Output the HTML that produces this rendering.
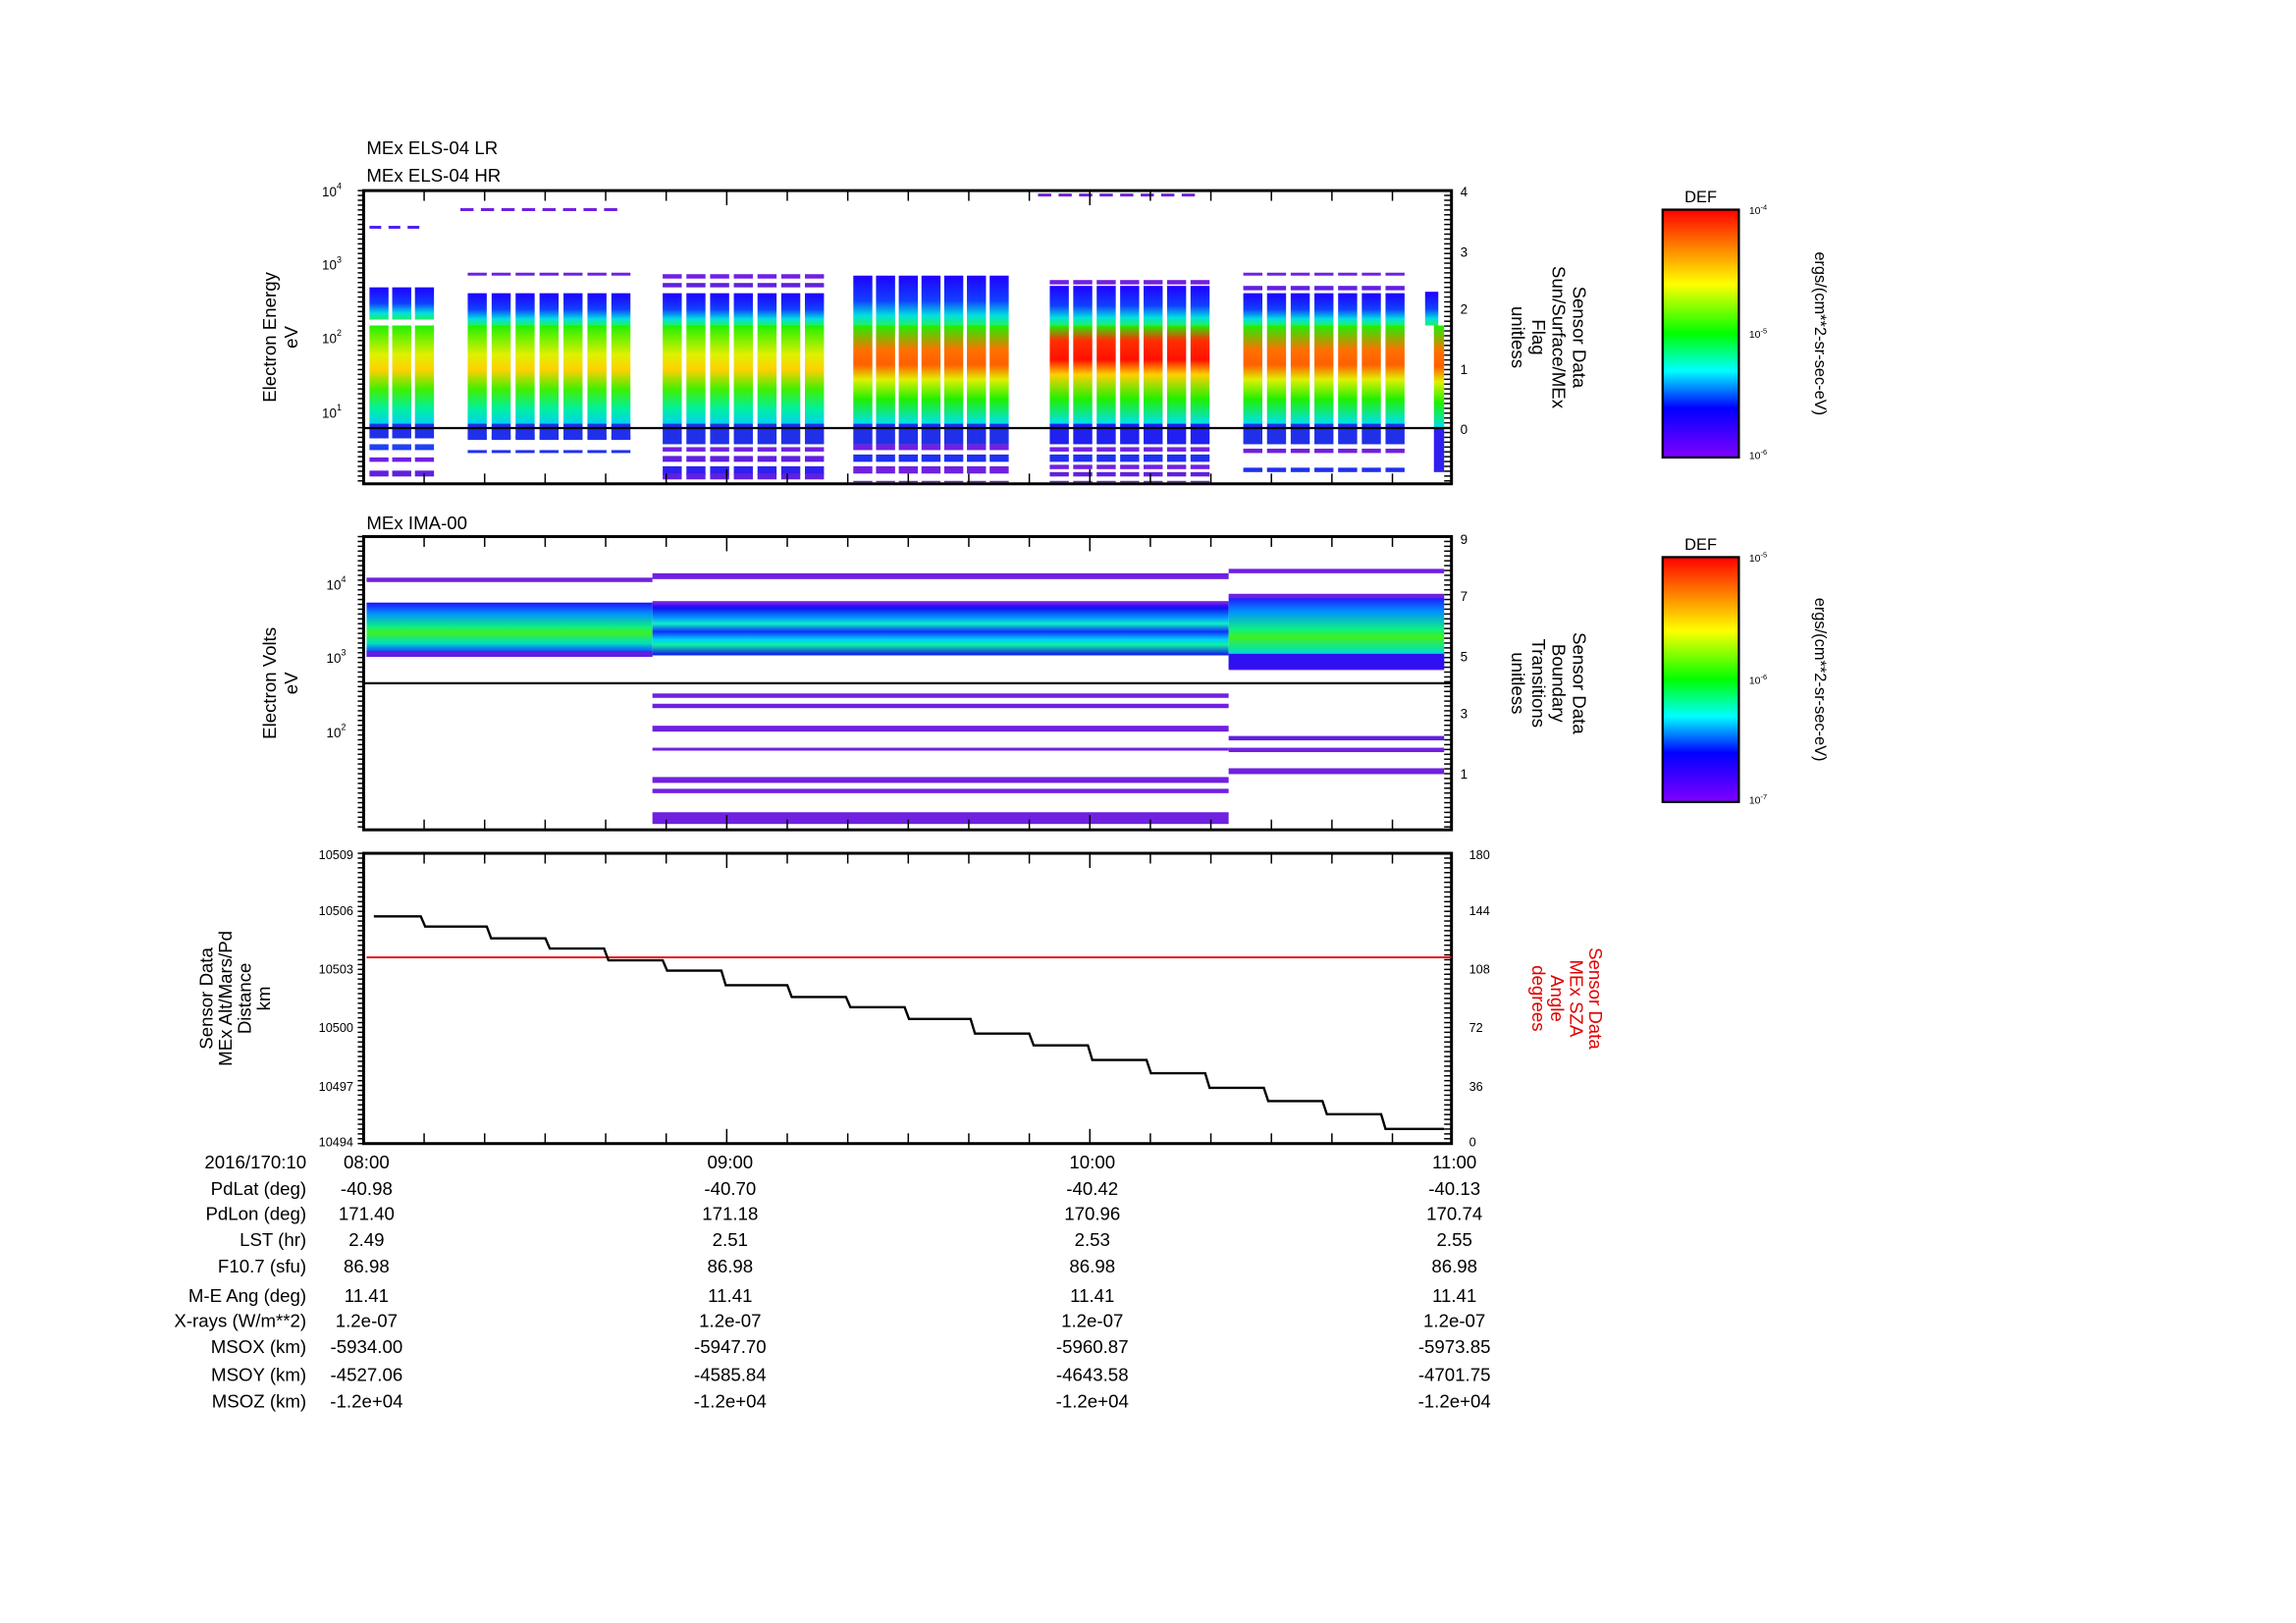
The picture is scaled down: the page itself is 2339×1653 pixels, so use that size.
<!DOCTYPE html>
<html><head><meta charset="utf-8"><style>
html,body{margin:0;padding:0;background:#fff;width:2339px;height:1653px;overflow:hidden}
svg{display:block}
text{font-family:"Liberation Sans",sans-serif;fill:#000}
</style></head><body>
<svg id="s" width="2339" height="1653" viewBox="0 0 1566 1107" preserveAspectRatio="none" xmlns="http://www.w3.org/2000/svg">
<defs>
<linearGradient id="rb" x1="0" y1="0" x2="0" y2="1">
<stop offset="0" stop-color="#ff0000"/><stop offset="0.15" stop-color="#ff8000"/><stop offset="0.3" stop-color="#ffff00"/><stop offset="0.5" stop-color="#00ff00"/><stop offset="0.65" stop-color="#00ffff"/><stop offset="0.8" stop-color="#0000ff"/><stop offset="1" stop-color="#8000ff"/>
</linearGradient>
<linearGradient id="lo1" x1="0" y1="0" x2="0" y2="1">
<stop offset="0" stop-color="#20f000"/><stop offset="0.3" stop-color="#e0f000"/><stop offset="0.45" stop-color="#ffd000"/><stop offset="0.65" stop-color="#40f000"/><stop offset="0.85" stop-color="#00f0a0"/><stop offset="1" stop-color="#00d0f0"/>
</linearGradient>
<linearGradient id="lo2" x1="0" y1="0" x2="0" y2="1">
<stop offset="0" stop-color="#20f000"/><stop offset="0.25" stop-color="#ff7000"/><stop offset="0.4" stop-color="#ff6000"/><stop offset="0.55" stop-color="#e0f000"/><stop offset="0.75" stop-color="#20f000"/><stop offset="1" stop-color="#00e0f0"/>
</linearGradient>
<linearGradient id="lo3" x1="0" y1="0" x2="0" y2="1">
<stop offset="0" stop-color="#20f000"/><stop offset="0.15" stop-color="#ff3000"/><stop offset="0.35" stop-color="#ff1000"/><stop offset="0.5" stop-color="#ffd000"/><stop offset="0.75" stop-color="#20f000"/><stop offset="1" stop-color="#00e0f0"/>
</linearGradient>
<linearGradient id="hi" x1="0" y1="0" x2="0" y2="1">
<stop offset="0" stop-color="#2000ff"/><stop offset="0.5" stop-color="#1040ff"/><stop offset="0.8" stop-color="#00e0e0"/><stop offset="1" stop-color="#20f060"/>
</linearGradient>
<linearGradient id="ima" x1="0" y1="0" x2="0" y2="1">
<stop offset="0" stop-color="#2010ff"/><stop offset="0.2" stop-color="#0090ff"/><stop offset="0.45" stop-color="#10f080"/><stop offset="0.55" stop-color="#40f020"/><stop offset="0.75" stop-color="#00e0c0"/><stop offset="0.9" stop-color="#1050ff"/><stop offset="1" stop-color="#5010ff"/>
</linearGradient>
<linearGradient id="ima2" x1="0" y1="0" x2="0" y2="1">
<stop offset="0" stop-color="#7010ff"/><stop offset="0.1" stop-color="#1010f0"/><stop offset="0.3" stop-color="#00a0ff"/><stop offset="0.4" stop-color="#10f0c0"/><stop offset="0.55" stop-color="#1030ff"/><stop offset="0.7" stop-color="#00d0ff"/><stop offset="0.8" stop-color="#10f0a0"/><stop offset="1" stop-color="#1010f0"/>
</linearGradient>
</defs>
<g id="g"></g>
</svg>
<script>
var g=document.getElementById('g'),h='';
function R(x,y,w,hh,f){h+='<rect x="'+x+'" y="'+y+'" width="'+w+'" height="'+hh+'" fill="'+f+'"/>';}
function L(x1,y1,x2,y2,c,w,d){h+='<line x1="'+x1+'" y1="'+y1+'" x2="'+x2+'" y2="'+y2+'" stroke="'+(c||'#000')+'" stroke-width="'+(w||1)+'"'+(d?' stroke-dasharray="'+d+'"':'')+'/>';}
function T(x,y,s,sz,a,c,extra){h+='<text x="'+x+'" y="'+y+'" font-size="'+sz+'" text-anchor="'+(a||'start')+'"'+(c?' style="fill:'+c+'"':'')+(extra||'')+'>'+s+'</text>';}
var G=[[252,3,13,44,'lo1'],[319,7,13,111,'lo1'],[452,7,13,110,'lo1'],[582,7,13,106,'lo2'],[716,7,13,109,'lo3'],[848,7,13,110,'lo2']];
G.forEach(function(gr,gi){
 var x0=gr[0],n=gr[1],w=gr[2],tw=gr[3],st=(tw-w)/(n-1);
 for(var i=0;i<n;i++){var x=x0+i*st;
  R(x,222,w,67,'url(#'+gr[4]+')');
  R(x,289,w,gi<2?10:14,gi==4?'#2020f0':'#2030e8');
  R(x,gi==0?196:gi==3?188:(gi==4?195:200),w,gi==3?34:(gi==4?27:22),'url(#hi)');
  if(gi==0){R(x,312,w,3,'#7020e0');R(x,321,w,4,'#6020e0');R(x,303,w,4,'#2040f0');}
  if(gi==1){R(x,186,w,2,'#7020e0');R(x,307,w,2,'#2030f0');R(x,297,w,3,'#2030f0');}
  if(gi==2){R(x,187,w,3,'#7020e0');R(x,193,w,3,'#6020e0');R(x,305,w,3,'#7020e0');R(x,311,w,4,'#6020e0');R(x,318,w,6,'#3020f0');R(x,323,w,4,'#6020e0');}
  if(gi==3){R(x,303,w,4,'#7020e0');R(x,310,w,5,'#2030f0');R(x,318,w,5,'#7020e0');R(x,328,w,1,'#7020e0');}
  if(gi==4){R(x,191,w,3,'#7020e0');R(x,305,w,3,'#7020e0');R(x,310,w,5,'#2030f0');R(x,317,w,3,'#7020e0');R(x,322,w,3,'#6020e0');R(x,328,w,1,'#7020e0');}
  if(gi==5){R(x,186,w,2,'#7020e0');R(x,195,w,3,'#6020e0');R(x,306,w,3,'#7020e0');R(x,319,w,3,'#2030f0');}
 }
});
L(252,155,290,155,'#5020f0',2,'8 5');L(708,133,818,133,'#7020e0',2,'9 5');L(314,143,422,143,'#7020e0',2,'9 5');
R(972,199,9,23,'url(#hi)');R(978,222,7,70,'url(#lo2)');R(978,292,7,30,'#3020f0');
function frame(y0,y1){h+='<rect x="248" y="'+y0+'" width="742" height="'+(y1-y0)+'" fill="none" stroke="#000" stroke-width="2"/>';
 for(var i=0;i<18;i++){var x=248+i*743/18;var big=i%6==0;L(x,y0,x,y0+(big?10:7));L(x,y1,x,y1-(big?10:7));}
 for(var y=y0;y<=y1;y+=3.3){L(990,y,985,y,'#000',1);L(248,y,244,y,'#000',1);}
}
frame(130,330);L(248,292,990,292,'#000',1.5);
T(250,105,'MEx ELS-04 LR',12.5);T(250,124,'MEx ELS-04 HR',12.5);
[['10<tspan font-size="6" dy="-5">4</tspan>',134],['10<tspan font-size="6" dy="-5">3</tspan>',184],['10<tspan font-size="6" dy="-5">2</tspan>',234],['10<tspan font-size="6" dy="-5">1</tspan>',285]].forEach(function(a){T(233,a[1],a[0],9,'end');});
[['4',134],['3',175],['2',214],['1',255],['0',296]].forEach(function(a){T(996,a[1],a[0],9);});
T(0,0,'Electron Energy',12.5,'middle','',' transform="translate(188,230) rotate(-90)"');
T(0,0,'eV',12.5,'middle','',' transform="translate(203,230) rotate(-90)"');
['Sensor Data','Sun/Surface/MEx','Flag','unitless'].forEach(function(s,i){T(0,0,s,12.5,'middle','',' transform="translate('+(1073-i*14)+',230) rotate(90)"');});
function cbar(y0,y1,a,b,c){R(1134,y0,52,y1-y0,'url(#rb)');h+='<rect x="1134" y="'+y0+'" width="52" height="'+(y1-y0)+'" fill="none" stroke="#000" stroke-width="1.5"/>';
 T(1160,y0-5,'DEF',11,'middle');T(1193,y0+3,'10<tspan font-size="5" dy="-3">'+a+'</tspan>',7);T(1193,(y0+y1)/2+3,'10<tspan font-size="5" dy="-3">'+b+'</tspan>',7);T(1193,y1+1,'10<tspan font-size="5" dy="-3">'+c+'</tspan>',7);
 T(0,0,'ergs/(cm**2-sr-sec-eV)',11,'middle','',' transform="translate(1238,'+((y0+y1)/2)+') rotate(90)"');}
cbar(143,312,'-4','-5','-6');cbar(380,547,'-5','-6','-7');
R(250,411,195,37,'url(#ima)');R(250,394,195,3,'#7020e0');R(250,444,195,4,'#6020e0');
R(445,411,393,36,'url(#ima2)');R(445,391,393,4,'#7020e0');R(445,410,393,2,'#7020e0');
[[473,3],[480,3],[495,4],[510,2],[530,4],[538,3],[554,8]].forEach(function(a){R(445,a[0],393,a[1],'#7020e0');});
R(838,407,147,50,'url(#ima)');R(838,388,147,3,'#7020e0');R(838,405,147,3,'#7020e0');R(838,446,147,10,'#3010f0');
R(838,502,147,3,'#6020e0');R(838,510,147,3,'#7020e0');R(838,524,147,4,'#7020e0');
frame(366,566);L(248,466,990,466,'#000',1.5);
T(250,361,'MEx IMA-00',12.5);
[['4',402],['3',452],['2',503]].forEach(function(a){T(236,a[1],'10<tspan font-size="6" dy="-5">'+a[0]+'</tspan>',9,'end');});
[['9',371],['7',410],['5',451],['3',490],['1',531]].forEach(function(a){T(996,a[1],a[0],9);});
T(0,0,'Electron Volts',12.5,'middle','',' transform="translate(188,466) rotate(-90)"');
T(0,0,'eV',12.5,'middle','',' transform="translate(203,466) rotate(-90)"');
['Sensor Data','Boundary','Transitions','unitless'].forEach(function(s,i){T(0,0,s,12.5,'middle','',' transform="translate('+(1073-i*14)+',466) rotate(90)"');});
frame(582,780);
L(250,653,990,653,'#e00000',1.2);
var st=[[255,625],[290,632],[335,640],[375,647],[415,655],[455,662],[495,672],[540,680],[580,687],[620,695],[665,705],[705,713],[745,723],[785,732],[825,742],[865,751],[905,760],[945,770]];
var p='M255 625';st.forEach(function(s,i){var nx=i<st.length-1?st[i+1][0]:988;p+=' L'+s[0]+' '+s[1]+' L'+(nx-3)+' '+s[1];});
h+='<path d="'+p+'" fill="none" stroke="#000" stroke-width="1.6"/>';
[['10509',586],['10506',624],['10503',664],['10500',704],['10497',744],['10494',782]].forEach(function(a){T(241,a[1],a[0],8.5,'end');});
[['180',586],['144',624],['108',664],['72',704],['36',744],['0',782]].forEach(function(a){T(1002,a[1],a[0],8.5);});
['Sensor Data','MEx Alt/Mars/Pd','Distance','km'].forEach(function(s,i){T(0,0,s,12.5,'middle','',' transform="translate('+(145+i*13)+',681) rotate(-90)"');});
['Sensor Data','MEx SZA','Angle','degrees'].forEach(function(s,i){T(0,0,s,12.5,'middle','#e00000',' transform="translate('+(1084-i*13)+',681) rotate(90)"');});
var rows=[['2016/170:10','08:00','09:00','10:00','11:00'],['PdLat (deg)','-40.98','-40.70','-40.42','-40.13'],['PdLon (deg)','171.40','171.18','170.96','170.74'],['LST (hr)','2.49','2.51','2.53','2.55'],['F10.7 (sfu)','86.98','86.98','86.98','86.98'],['M-E Ang (deg)','11.41','11.41','11.41','11.41'],['X-rays (W/m**2)','1.2e-07','1.2e-07','1.2e-07','1.2e-07'],['MSOX (km)','-5934.00','-5947.70','-5960.87','-5973.85'],['MSOY (km)','-4527.06','-4585.84','-4643.58','-4701.75'],['MSOZ (km)','-1.2e+04','-1.2e+04','-1.2e+04','-1.2e+04']];
var ys=[797,815,832,850,868,888,905,923,942,960];
rows.forEach(function(r,i){var y=ys[i];T(209,y,r[0],12.5,'end');[250,498,745,992].forEach(function(x,j){T(x,y,r[j+1],12.5,'middle');});});
g.innerHTML=h;
</script>
</body></html>
